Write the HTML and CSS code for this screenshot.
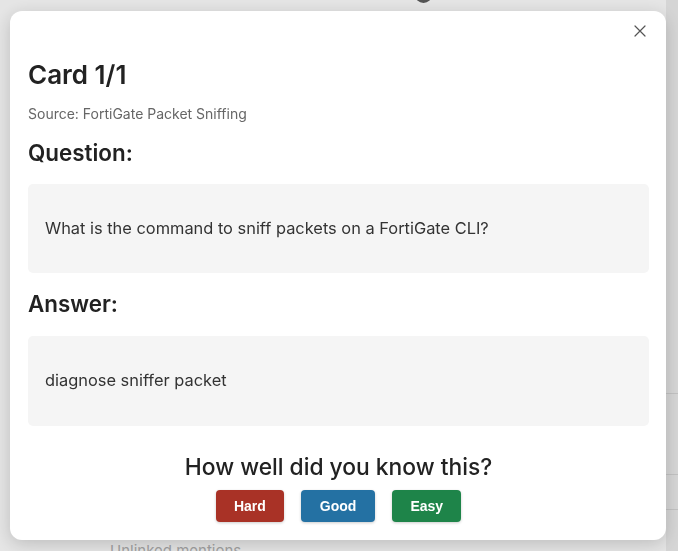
FILE: index.html
```html
<!DOCTYPE html>
<html lang="en">
<head>
<meta charset="utf-8">
<title>Flashcard review</title>
<link rel="stylesheet" href="styles.css">
</head>
<body>
<div class="app">
  <main class="main">
    <div class="avatar"></div>
    <div class="mentions">Unlinked mentions</div>
  </main>
  <aside class="side">
    <div class="side-row side-row-a"></div>
    <div class="side-row side-row-b"></div>
    <div class="side-row"></div>
  </aside>
</div>

<div class="overlay">
  <div class="modal">
    <button class="close" aria-label="Close">
      <svg width="12" height="12" viewBox="0 0 12 12"><path d="M1 1 L11 11 M11 1 L1 11" stroke="#555" stroke-width="1.2" fill="none" stroke-linecap="round"/></svg>
    </button>
    <h2 class="title">Card 1/1</h2>
    <div class="source">Source: FortiGate Packet Sniffing</div>
    <h3 class="label">Question:</h3>
    <div class="box">What is the command to sniff packets on a FortiGate CLI?</div>
    <h3 class="label label-answer">Answer:</h3>
    <div class="box box-answer">diagnose sniffer packet</div>
    <div class="rate">
      <div class="rate-title">How well did you know this?</div>
      <div class="buttons">
        <button class="btn btn-hard">Hard</button>
        <button class="btn btn-good">Good</button>
        <button class="btn btn-easy">Easy</button>
      </div>
    </div>
  </div>
</div>
</body>
</html>
```

FILE: styles.css
```css
* { box-sizing: border-box; }

html, body {
  margin: 0;
  padding: 0;
  height: 100%;
  overflow: hidden;
}

body {
  font-family: Inter, "Noto Sans", sans-serif;
  background: #ffffff;
}

.app {
  display: flex;
  height: 551px;
}

.main {
  flex: 1;
  display: flex;
  flex-direction: column;
  overflow: hidden;
}

.avatar {
  width: 17px;
  height: 17px;
  border-radius: 50%;
  background: #5e5e5e;
  margin: -14px 0 0 415px;
}

.mentions {
  margin: auto 0 -9px 110px;
  font-size: 15px;
  line-height: 18px;
  color: #b4b4b4;
}

.side {
  width: 12px;
  background: #eeeeee;
  padding-top: 393px;
}

.side-row {
  border-top: 1px solid #d8d8d8;
}

.side-row-a { height: 81px; }
.side-row-b { height: 35px; }

.overlay {
  position: fixed;
  inset: 0;
  background: rgba(0, 0, 0, 0.1);
}

.modal {
  position: relative;
  width: 656px;
  margin: 11px 0 0 10px;
  padding: 18px 17px 18px 18px;
  background: #ffffff;
  border-radius: 12px;
  box-shadow: 0 4px 18px rgba(0, 0, 0, 0.18);
  color: #222222;
}

.close {
  position: absolute;
  top: 14px;
  right: 20px;
  width: 12px;
  height: 12px;
  padding: 0;
  border: 0;
  background: none;
  display: flex;
}

.title {
  margin: 30px 0 0;
  font-size: 26px;
  line-height: 31px;
  font-weight: 600;
  color: #222222;
}

.source {
  margin-top: 15px;
  font-size: 14px;
  line-height: 17px;
  color: #666666;
}

.label {
  margin: 17px 0 0;
  font-size: 22.4px;
  line-height: 27px;
  font-weight: 600;
  color: #222222;
}

.label-answer { margin-top: 17px; }

.box {
  margin-top: 18px;
  padding: 35px 17px;
  background: #f5f5f5;
  border-radius: 5px;
  font-size: 16.4px;
  line-height: 19px;
  color: #333333;
}

.box-answer {
  margin-top: 19px;
  padding-bottom: 36px;
}

.rate {
  margin-top: 27px;
  display: flex;
  flex-direction: column;
  align-items: center;
}

.rate-title {
  font-size: 22.8px;
  line-height: 27px;
  font-weight: 500;
  color: #222222;
}

.buttons {
  margin-top: 10px;
  display: flex;
  gap: 17px;
}

.btn {
  height: 32px;
  padding: 0 18px;
  border: 0;
  border-radius: 4px;
  font-family: "Liberation Sans", Arial, sans-serif;
  font-size: 14px;
  font-weight: 700;
  color: #ffffff;
  box-shadow: 0 1px 3px rgba(0, 0, 0, 0.2);
}

.btn-hard { background: #a93226; }
.btn-good { background: #2471a3; padding: 0 19px; }
.btn-easy { background: #1e8449; }
```
